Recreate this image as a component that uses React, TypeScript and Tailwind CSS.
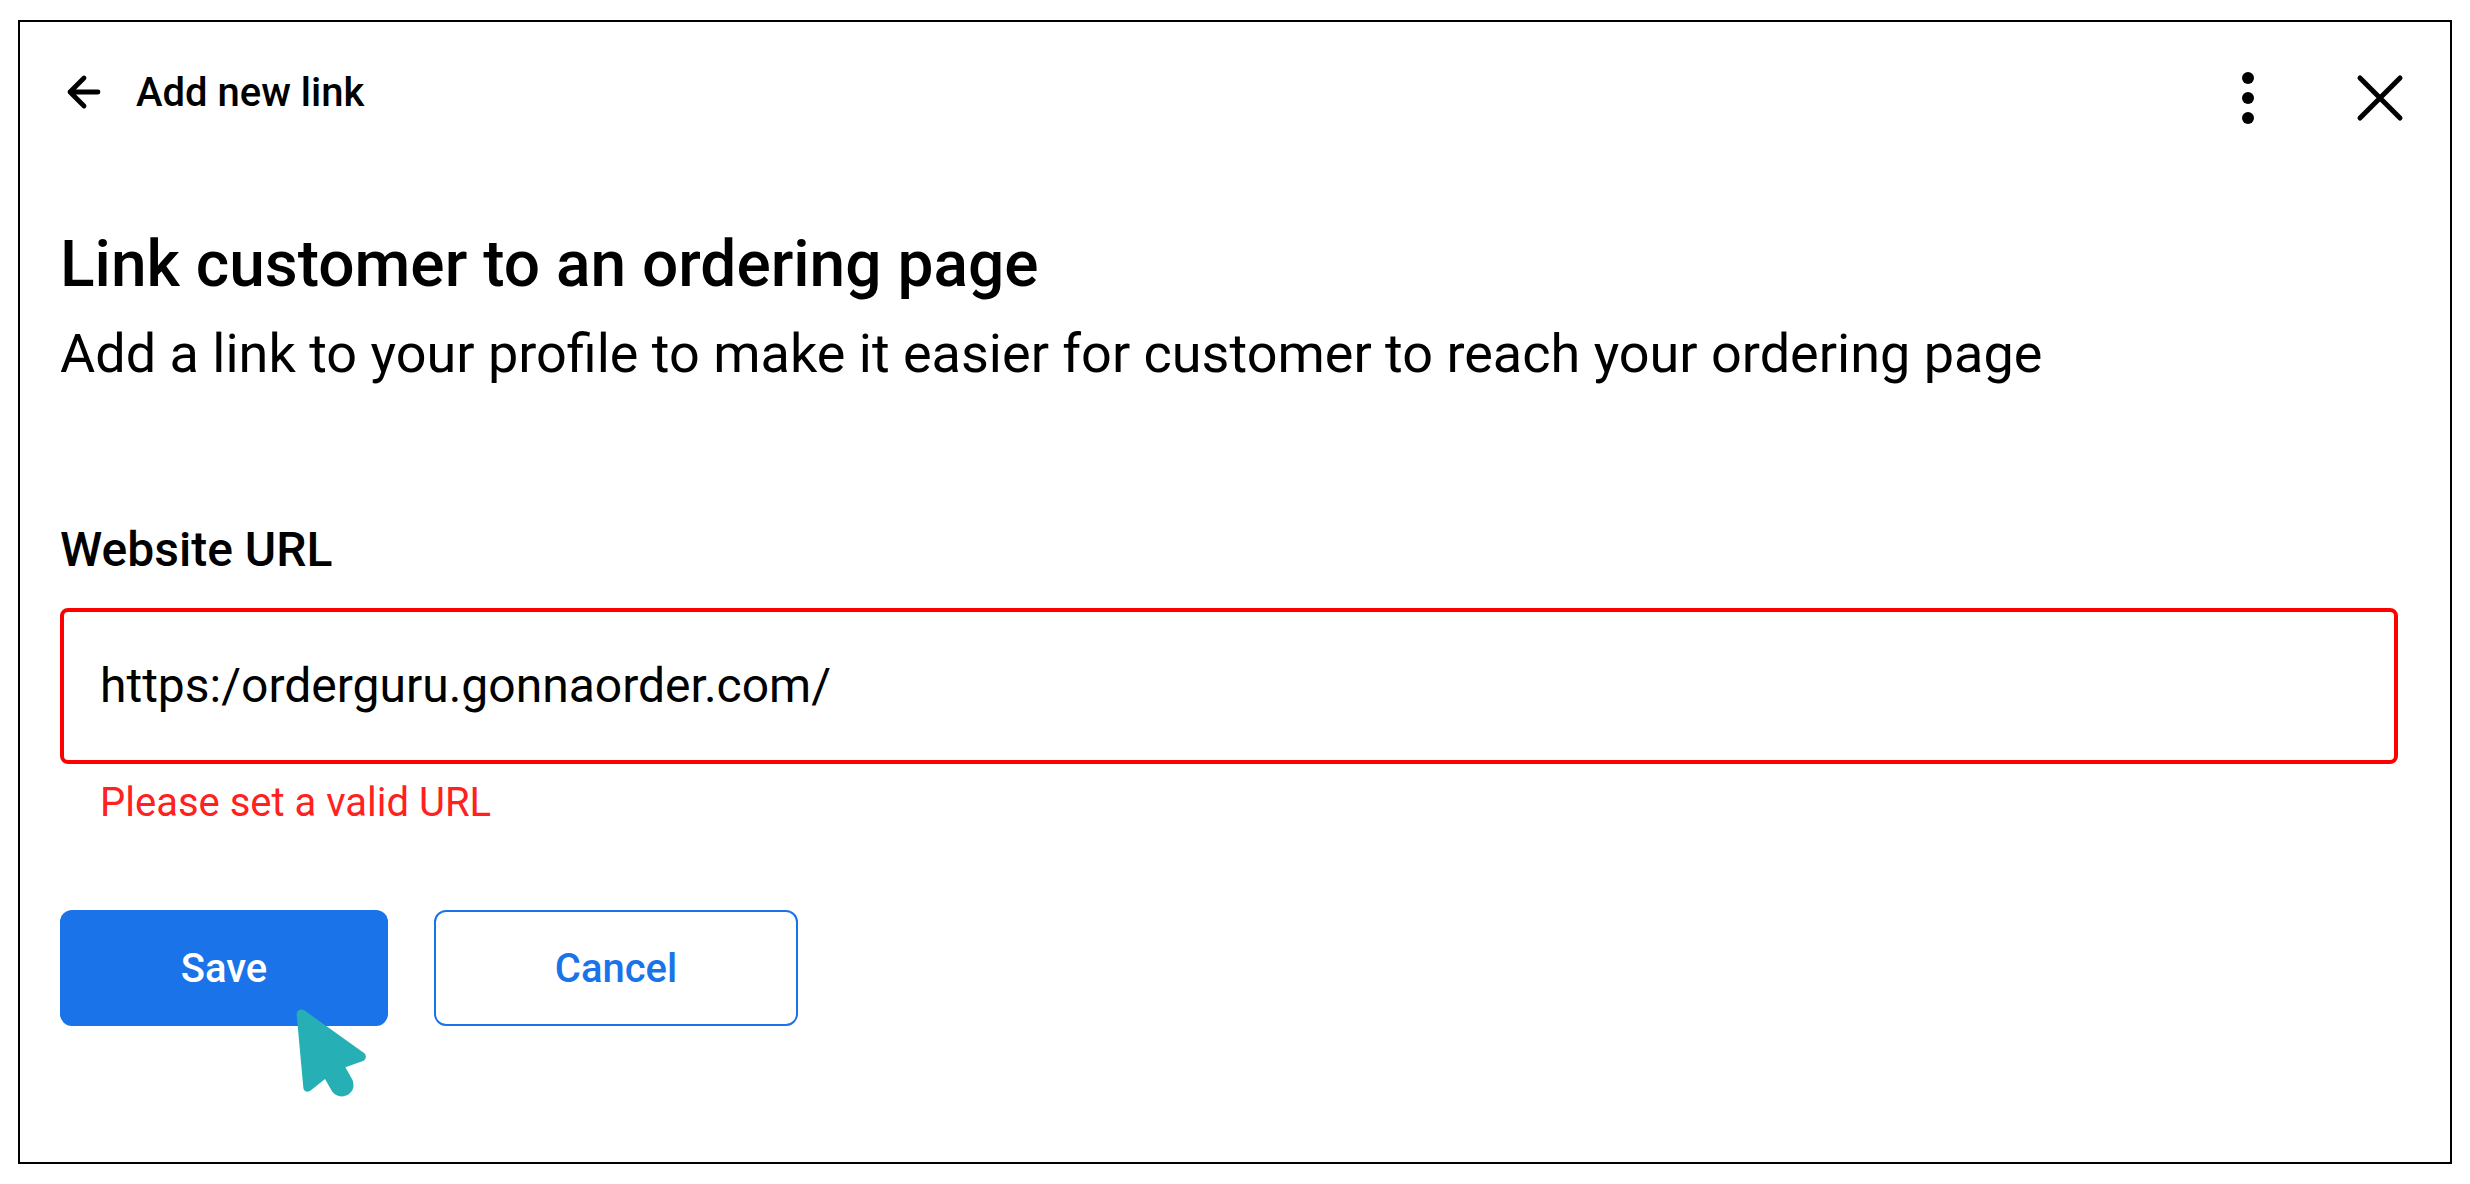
import React, { useState } from "react";

const ArrowLeftIcon: React.FC = () => (
  <svg
    className="w-12 h-12"
    viewBox="0 0 48 48"
    fill="none"
    stroke="currentColor"
    strokeWidth="4.8"
    strokeLinecap="round"
    strokeLinejoin="round"
  >
    <path d="M38 24H10M24 10L10 24L24 38" />
  </svg>
);

const MoreIcon: React.FC = () => (
  <svg className="w-[60px] h-[60px]" viewBox="0 0 60 60" fill="currentColor">
    <circle cx="30" cy="10" r="6" />
    <circle cx="30" cy="30" r="6" />
    <circle cx="30" cy="50" r="6" />
  </svg>
);

const CloseIcon: React.FC = () => (
  <svg
    className="w-[60px] h-[60px]"
    viewBox="0 0 60 60"
    fill="none"
    stroke="currentColor"
    strokeWidth="5"
    strokeLinecap="round"
  >
    <path d="M10 10L50 50M50 10L10 50" />
  </svg>
);

const Pointer: React.FC = () => (
  <svg
    className="absolute left-[236px] top-[98px] w-[72px] h-[90px] pointer-events-none"
    viewBox="0 0 216 270"
    fill="#26afb4"
    aria-hidden="true"
  >
    <path d="M2 20C1 8 13 0 25 7L203 134C213 141 211 155 201 159L148 178L168 213C176 230 174 248 158 259C141 270 119 267 108 250L87 213L45 247C36 255 23 251 22 239Z" />
  </svg>
);

const App: React.FC = () => {
  const [url, setUrl] = useState("https:/orderguru.gonnaorder.com/");

  return (
    <main className="min-h-screen flex flex-col bg-white px-[18px] py-5 font-['Roboto',sans-serif] text-black">
      <section className="flex-1 border-2 border-black px-10 pt-[46px] pb-20">
        <header className="flex items-start justify-between">
          <div className="flex items-start gap-7">
            <button type="button" aria-label="Back">
              <ArrowLeftIcon />
            </button>
            <span className="text-[40px] leading-[50px] font-medium">
              Add new link
            </span>
          </div>
          <div className="flex items-center gap-[72px]">
            <button type="button" aria-label="More options">
              <MoreIcon />
            </button>
            <button type="button" aria-label="Close">
              <CloseIcon />
            </button>
          </div>
        </header>

        <h1 className="mt-24 text-[64px] leading-[82px] font-medium">
          Link customer to an ordering page
        </h1>
        <p className="mt-3 text-[54px] leading-[72px]">
          Add a link to your profile to make it easier for customer to reach
          your ordering page
        </p>

        <form
          className="mt-[132px] mr-3"
          noValidate
          onSubmit={(e) => e.preventDefault()}
        >
          <label
            htmlFor="website-url"
            className="block text-[48px] leading-[56px] font-medium"
          >
            Website URL
          </label>
          <input
            id="website-url"
            type="url"
            value={url}
            onChange={(e) => setUrl(e.target.value)}
            aria-invalid="true"
            aria-describedby="website-url-error"
            className="block mt-[30px] w-full h-[156px] px-9 pb-0.5 border-4 border-[#ff0000] rounded-lg text-[48px] leading-[56px] outline-none"
          />
          <p
            id="website-url-error"
            className="mt-[14px] pl-10 text-[40px] leading-[50px] text-[#ff2020]"
          >
            Please set a valid URL
          </p>

          <div className="mt-[82px] flex gap-[46px] text-[40px] leading-[50px] font-medium">
            <div className="relative">
              <button
                type="submit"
                className="w-[328px] h-[116px] pt-0.5 rounded-xl bg-[#1a73e8] text-white"
              >
                Save
              </button>
              <Pointer />
            </div>
            <button
              type="button"
              className="w-[364px] h-[116px] pt-0.5 rounded-xl border-2 border-[#1a73e8] text-[#1a73e8]"
            >
              Cancel
            </button>
          </div>
        </form>
      </section>
    </main>
  );
};

export default App;
